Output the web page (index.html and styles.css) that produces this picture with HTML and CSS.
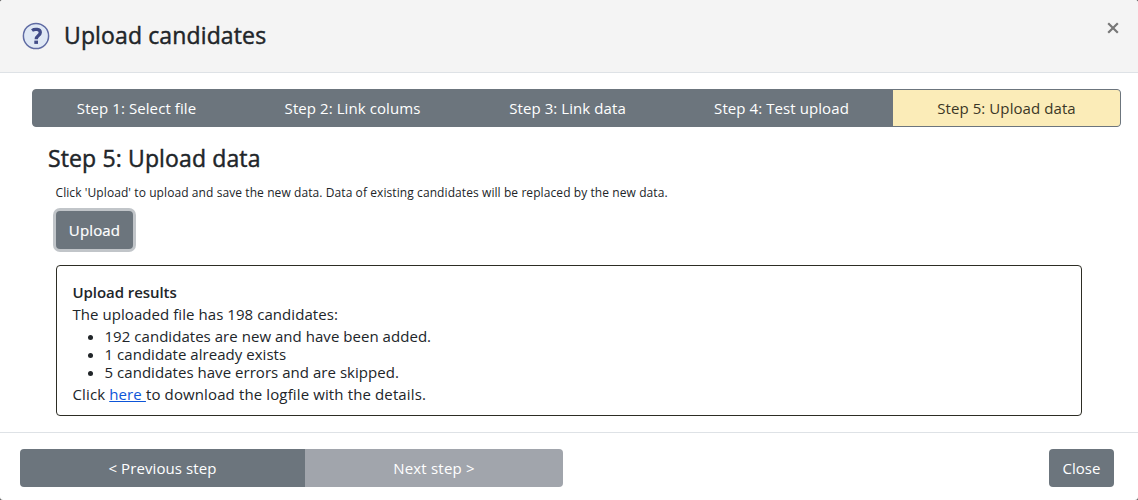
FILE: index.html
```html
<!DOCTYPE html>
<html lang="en">
<head>
<meta charset="utf-8">
<title>Upload candidates</title>
<link rel="stylesheet" href="styles.css">
</head>
<body>
<div class="modal">
  <header class="modal-header">
    <svg class="help" viewBox="0 0 28 28" width="28" height="28"><circle cx="14" cy="14" r="12.6" fill="#dfe8f5" stroke="#5f6ba3" stroke-width="1.5"/><path d="M10 8.500C12.500 6.800 18.400 6.700 18.300 10.500C18.300 13.500 14.300 13.400 14.200 17.200" fill="none" stroke="#414c88" stroke-width="3.300"/><rect x="12.300" y="18.600" width="3.700" height="3.300" fill="#414c88"/></svg>
    <h1 class="title">Upload candidates</h1>
    <svg class="dismiss" viewBox="0 0 12 12" width="12" height="12"><path d="M1.200 1.200L10.800 10.800M10.800 1.200L1.200 10.800" stroke="#777" stroke-width="2.200"/></svg>
  </header>
  <main class="modal-body">
    <nav class="steps">
      <div class="step s1">Step 1: Select file</div>
      <div class="step s2">Step 2: Link colums</div>
      <div class="step s3">Step 3: Link data</div>
      <div class="step s4">Step 4: Test upload</div>
      <div class="step s5 active">Step 5: Upload data</div>
    </nav>
    <h2 class="heading">Step 5: Upload data</h2>
    <p class="hint">Click 'Upload' to upload and save the new data. Data of existing candidates will be replaced by the new data.</p>
    <button class="btn upload">Upload</button>
    <section class="results">
      <h3 class="results-title">Upload results</h3>
      <p class="line">The uploaded file has 198 candidates:</p>
      <ul class="list">
        <li>192 candidates are new and have been added.</li>
        <li>1 candidate already exists</li>
        <li>5 candidates have errors and are skipped.</li>
      </ul>
      <p class="line log">Click <a href="#">here </a>to download the logfile with the details.</p>
    </section>
  </main>
  <footer class="modal-footer">
    <div class="pager">
      <button class="btn prev">&lt; Previous step</button>
      <button class="btn next" disabled>Next step &gt;</button>
    </div>
    <button class="btn close">Close</button>
  </footer>
</div>
</body>
</html>
```
FILE: styles.css
```css
* { box-sizing: border-box; }
body {
  margin: 0;
  background: #5b5b5b;
  color: #212529;
  font-family: "Open Sans", "Noto Sans", sans-serif;
  font-size: 15px;
  line-height: 22px;
}
h1, h2, h3, p, ul { margin: 0; padding: 0; }
.modal {
  display: flex;
  flex-direction: column;
  height: 500px;
  overflow: hidden;
  background: #fff;
  border-radius: 3px;
}
.modal-header {
  display: flex;
  height: 73px;
  padding: 0 19px 0 22px;
  background: #f4f4f4;
  border-bottom: 1px solid #dee2e6;
}
.help { margin-top: 22px; }
.title, .heading {
  font-size: 23px;
  line-height: 32px;
  font-weight: 400;
  letter-spacing: 0.13px;
  -webkit-text-stroke: 0.45px #212529;
}
.title { flex: 1; margin: 19px 0 0 14px; }
.dismiss { margin-top: 22px; }
.modal-body { height: 360px; padding: 16px 17px 0 32px; border-bottom: 1px solid #dee2e6; }
.steps {
  display: flex;
  height: 38px;
  border: 1px solid #6c757d;
  border-radius: 4px;
  background: #6c757d;
  color: #fff;
  letter-spacing: 0.08px;
  overflow: hidden;
}
.step { display: flex; align-items: center; justify-content: center; }
.s1 { width: 207px; }
.s2 { width: 225px; }
.s3 { width: 205px; }
.s4 { width: 223px; }
.s5 { flex: 1; }
.active { background: #fbecb8; color: #3b3726; }
.heading { margin: 15px 0 0 16px; }
.hint { margin: 10px 0 0 23.500px; font-size: 12px; line-height: 18px; letter-spacing: 0.085px; }
.btn {
  height: 38px;
  padding: 0;
  border: 0;
  border-radius: 4px;
  background: #6c757d;
  color: #fff;
  font: inherit;
}
.upload {
  display: block;
  width: 77px;
  margin: 9px 0 0 24px;
  box-shadow: 0 0 0 3px #c1c5c9;
  letter-spacing: 0.15px;
  -webkit-text-stroke: 0.2px #fff;
}
.results {
  width: 1026px;
  height: 151px;
  margin: 16px 0 0 24px;
  padding: 15px 16px 0 15.500px;
  border: 1px solid #2d2d24;
  border-radius: 4px;
}
.results-title { font-size: 15px; line-height: 22px; font-weight: 600; letter-spacing: -0.07px; }
.line { letter-spacing: 0.06px; }
.log { letter-spacing: 0.125px; }
.list { margin: 2px 0; padding-left: 32px; line-height: 18px; letter-spacing: 0.04px; }
.line a { color: #0d55d8; }
.modal-footer { display: flex; justify-content: space-between; padding: 16px 24px 0 20px; }
.pager { display: flex; }
.prev { width: 285px; border-radius: 4px 0 0 4px; letter-spacing: 0.09px; }
.next { width: 258px; border-radius: 0 4px 4px 0; background: #a1a5ac; letter-spacing: 0.2px; }
.close { width: 65px; }
```
